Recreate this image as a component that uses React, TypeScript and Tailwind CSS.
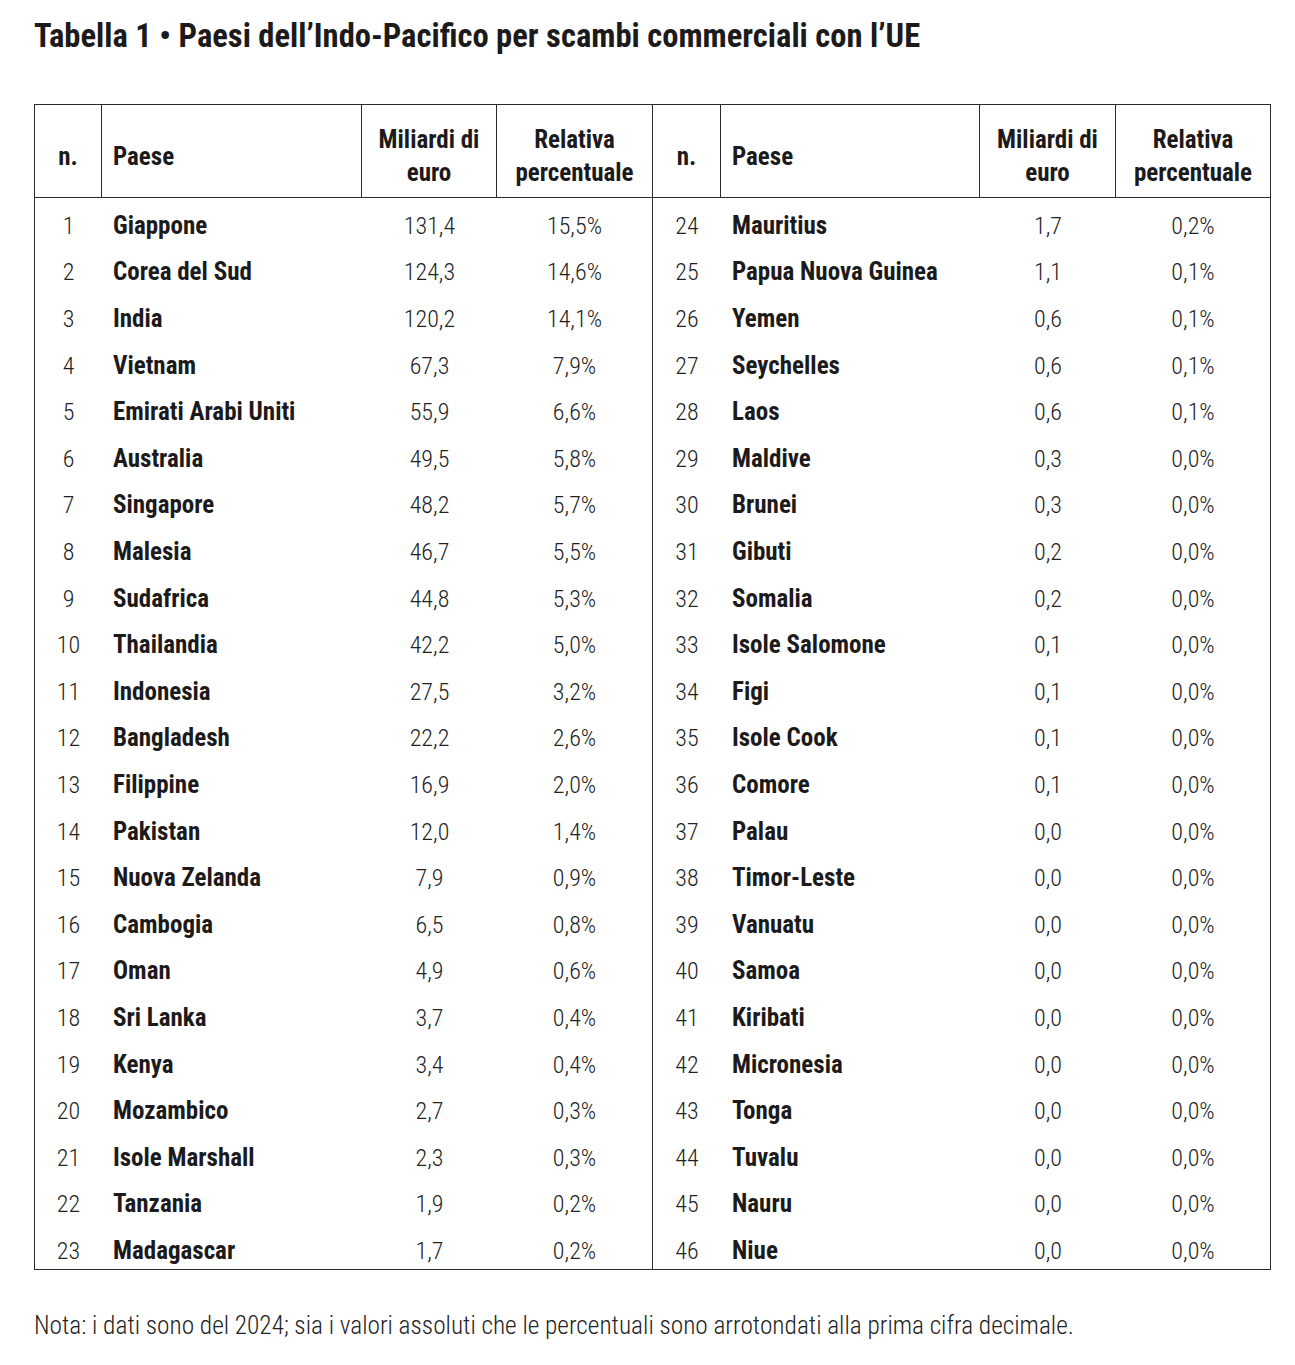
import React from "react";

type Row = [number, string, string, string];

const leftRows: Row[] = [
  [1, "Giappone", "131,4", "15,5%"],
  [2, "Corea del Sud", "124,3", "14,6%"],
  [3, "India", "120,2", "14,1%"],
  [4, "Vietnam", "67,3", "7,9%"],
  [5, "Emirati Arabi Uniti", "55,9", "6,6%"],
  [6, "Australia", "49,5", "5,8%"],
  [7, "Singapore", "48,2", "5,7%"],
  [8, "Malesia", "46,7", "5,5%"],
  [9, "Sudafrica", "44,8", "5,3%"],
  [10, "Thailandia", "42,2", "5,0%"],
  [11, "Indonesia", "27,5", "3,2%"],
  [12, "Bangladesh", "22,2", "2,6%"],
  [13, "Filippine", "16,9", "2,0%"],
  [14, "Pakistan", "12,0", "1,4%"],
  [15, "Nuova Zelanda", "7,9", "0,9%"],
  [16, "Cambogia", "6,5", "0,8%"],
  [17, "Oman", "4,9", "0,6%"],
  [18, "Sri Lanka", "3,7", "0,4%"],
  [19, "Kenya", "3,4", "0,4%"],
  [20, "Mozambico", "2,7", "0,3%"],
  [21, "Isole Marshall", "2,3", "0,3%"],
  [22, "Tanzania", "1,9", "0,2%"],
  [23, "Madagascar", "1,7", "0,2%"],
];

const rightRows: Row[] = [
  [24, "Mauritius", "1,7", "0,2%"],
  [25, "Papua Nuova Guinea", "1,1", "0,1%"],
  [26, "Yemen", "0,6", "0,1%"],
  [27, "Seychelles", "0,6", "0,1%"],
  [28, "Laos", "0,6", "0,1%"],
  [29, "Maldive", "0,3", "0,0%"],
  [30, "Brunei", "0,3", "0,0%"],
  [31, "Gibuti", "0,2", "0,0%"],
  [32, "Somalia", "0,2", "0,0%"],
  [33, "Isole Salomone", "0,1", "0,0%"],
  [34, "Figi", "0,1", "0,0%"],
  [35, "Isole Cook", "0,1", "0,0%"],
  [36, "Comore", "0,1", "0,0%"],
  [37, "Palau", "0,0", "0,0%"],
  [38, "Timor-Leste", "0,0", "0,0%"],
  [39, "Vanuatu", "0,0", "0,0%"],
  [40, "Samoa", "0,0", "0,0%"],
  [41, "Kiribati", "0,0", "0,0%"],
  [42, "Micronesia", "0,0", "0,0%"],
  [43, "Tonga", "0,0", "0,0%"],
  [44, "Tuvalu", "0,0", "0,0%"],
  [45, "Nauru", "0,0", "0,0%"],
  [46, "Niue", "0,0", "0,0%"],
];

function HeaderHalf({ last }: { last: boolean }) {
  return (
    <>
      <div className="flex items-center justify-center border-r border-[#2b2b2b] pt-[12px] font-bold">n.</div>
      <div className="flex items-center border-r border-[#2b2b2b] pl-[11px] pt-[12px] font-bold">Paese</div>
      <div className="flex flex-col items-center justify-center border-r border-[#2b2b2b] pt-[10px] text-center font-bold leading-[33px]">
        <span>Miliardi di</span>
        <span>euro</span>
      </div>
      <div
        className={
          "flex flex-col items-center justify-center pt-[10px] text-center font-bold leading-[33px] " +
          (last ? "" : "border-r border-[#2b2b2b]")
        }
      >
        <span>Relativa</span>
        <span>percentuale</span>
      </div>
    </>
  );
}

function BodyRow({ row, divider }: { row: Row; divider: boolean }) {
  return (
    <>
      <div className="flex items-center justify-center pt-[10px] text-[24px] font-light text-[#222]">{row[0]}</div>
      <div className="flex items-center whitespace-nowrap pl-[11px] pt-[9px] font-bold">{row[1]}</div>
      <div className="flex items-center justify-center pt-[10px] text-[24px] font-light text-[#222]">{row[2]}</div>
      <div
        className={
          "flex items-center justify-center pt-[10px] text-[24px] font-light text-[#222] " +
          (divider ? "border-r border-[#2b2b2b]" : "")
        }
      >
        {row[3]}
      </div>
    </>
  );
}

export default function App() {
  return (
    <div className="min-h-[1365px] w-[1295px] bg-white font-['Roboto',sans-serif] font-stretch-[75%] text-[#1c1a1b]">
      <div className="pl-[34px] pt-[20px]">
        <h1 className="text-[32.6px] font-bold leading-none">
          Tabella 1 • Paesi dell’Indo-Pacifico per scambi commerciali con l’UE
        </h1>

        <div className="mt-[51px] w-[1237px] border border-[#2b2b2b] text-[25px] leading-none">
          <div className="grid h-[93px] grid-cols-[67px_260px_135px_156px_68px_259px_136px_154px] border-b border-[#2b2b2b]">
            <HeaderHalf last={false} />
            <HeaderHalf last={true} />
          </div>
          <div className="grid auto-rows-[46.6px] grid-cols-[67px_260px_135px_156px_68px_259px_136px_154px]">
            {leftRows.map((r, i) => (
              <React.Fragment key={r[0]}>
                <BodyRow row={r} divider={true} />
                <BodyRow row={rightRows[i]} divider={false} />
              </React.Fragment>
            ))}
          </div>
        </div>

        <p className="mt-[43px] text-[25.3px] font-light leading-none text-[#222]">
          Nota: i dati sono del 2024; sia i valori assoluti che le percentuali sono arrotondati alla prima cifra decimale.
        </p>
      </div>
    </div>
  );
}
